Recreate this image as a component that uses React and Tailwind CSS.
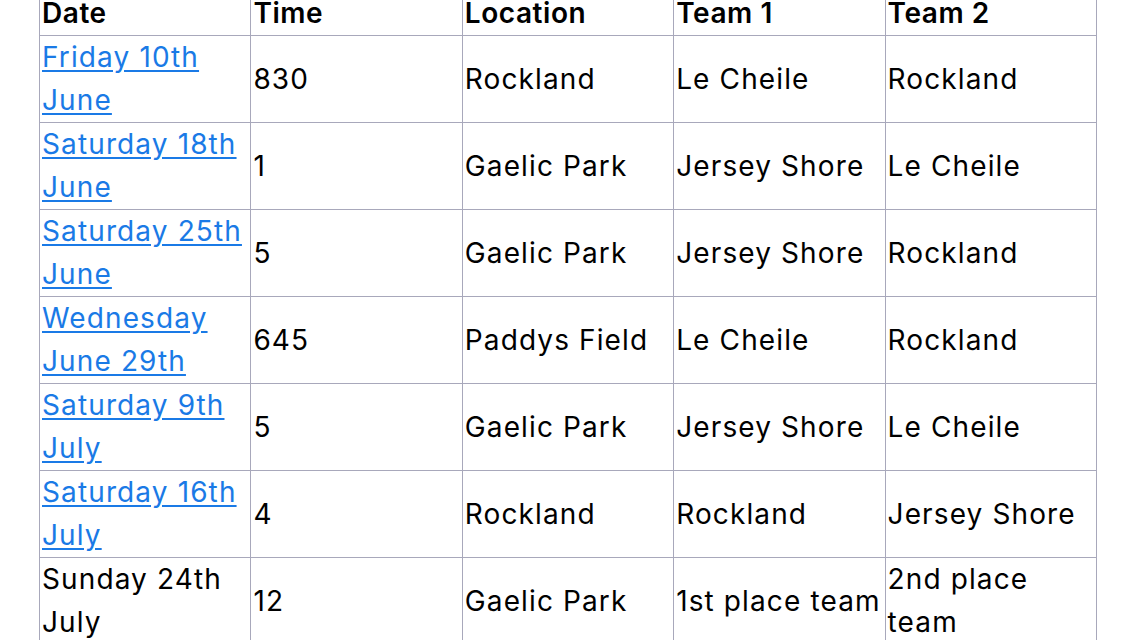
import React from "react";

const rows = [
  { date: "Friday 10th June", link: true, time: "830", location: "Rockland", team1: "Le Cheile", team2: "Rockland" },
  { date: "Saturday 18th June", link: true, time: "1", location: "Gaelic Park", team1: "Jersey Shore", team2: "Le Cheile" },
  { date: "Saturday 25th June", link: true, time: "5", location: "Gaelic Park", team1: "Jersey Shore", team2: "Rockland" },
  { date: "Wednesday June 29th", link: true, time: "645", location: "Paddys Field", team1: "Le Cheile", team2: "Rockland" },
  { date: "Saturday 9th July", link: true, time: "5", location: "Gaelic Park", team1: "Jersey Shore", team2: "Le Cheile" },
  { date: "Saturday 16th July", link: true, time: "4", location: "Rockland", team1: "Rockland", team2: "Jersey Shore" },
  { date: "Sunday 24th July", link: false, time: "12", location: "Gaelic Park", team1: "1st place team", team2: "2nd place team" },
];

const cell = "border border-[#a8a8bb] px-[2px] py-0 align-middle";

export default function App() {
  return (
    <div
      className="min-h-screen bg-white text-black overflow-hidden"
      style={{ fontFamily: "Inter, 'Noto Sans', sans-serif" }}
    >
      <table className="table-fixed border-collapse w-[1058px] mx-auto -mt-[9px] text-[28px] leading-[43px] tracking-[0.04em]">
        <thead>
          <tr>
            {["Date", "Time", "Location", "Team 1", "Team 2"].map((h) => (
              <th key={h} className={`${cell} text-left font-semibold tracking-[0.02em]`}>
                {h}
              </th>
            ))}
          </tr>
        </thead>
        <tbody>
          {rows.map((r, i) => (
            <tr key={i}>
              <td className={cell}>
                {r.link ? (
                  <a href="#" className="text-[#1a7ae6] underline underline-offset-[3px]">
                    {r.date}
                  </a>
                ) : (
                  r.date
                )}
              </td>
              <td className={cell}>{r.time}</td>
              <td className={cell}>{r.location}</td>
              <td className={cell}>{r.team1}</td>
              <td className={cell}>{r.team2}</td>
            </tr>
          ))}
        </tbody>
      </table>
    </div>
  );
}
